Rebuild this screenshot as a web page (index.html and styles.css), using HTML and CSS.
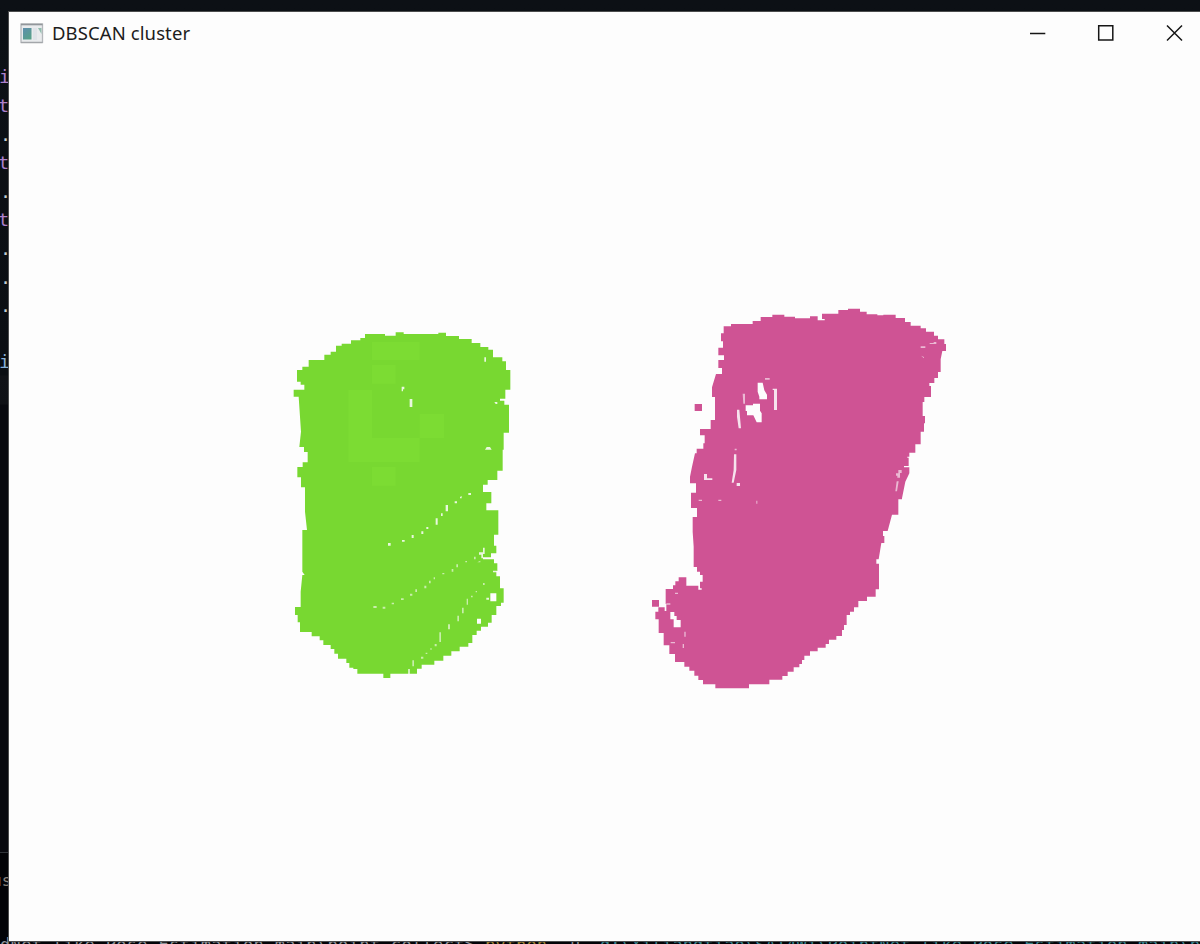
FILE: index.html
```
<!DOCTYPE html>
<html lang="en">
<head>
<meta charset="utf-8">
<title>DBSCAN cluster</title>
<link rel="stylesheet" href="styles.css">
</head>
<body>
<div class="desktop">
  <div class="editor">
    <span class="code kw l1">i</span><span class="code kw l2">t</span><span class="code dot l3">.</span><span class="code kw l4">t</span><span class="code dot l5">.</span><span class="code kw l6">t</span><span class="code dot l7">.</span><span class="code dot l8">.</span><span class="code dot l9">.</span><span class="code id l10">i</span>
    <div class="panel"><span class="tab">us</span></div>
    <svg class="terminal" width="1200" height="20" viewBox="0 0 1200 20">
      <text class="prompt" x="0" y="15" textLength="475">dNet like Pose Estimation main\point collect&gt;</text>
      <text class="command" x="485" y="15" textLength="62">python</text>
      <text class="prompt" x="570" y="15">u</text>
      <text class="path" x="600" y="15" textLength="600">d:\Xiliangtiao\SAI4Wi\PointNet like Pose Estimation main\p</text>
    </svg>
  </div>
  <main class="window">
    <header class="titlebar">
      <svg class="app-icon" width="24" height="21" viewBox="0 0 24 21">
        <defs><linearGradient id="g" x1="0" y1="0" x2="0.6" y2="1"><stop offset="0" stop-color="#5f8eae"/><stop offset="1" stop-color="#58a08a"/></linearGradient></defs>
        <rect x="1" y="1" width="21.5" height="18.5" fill="#e9ebed" stroke="#b4b7bb" stroke-width="1.3"/>
        <path d="M1 1.5H22.5" stroke="#92969b" stroke-width="1.6"/>
        <path d="M1 19.5H22.5" stroke="#a3a6aa" stroke-width="1.3"/>
        <rect x="3" y="5" width="8.5" height="11.5" fill="url(#g)"/>
        <rect x="13" y="5" width="4" height="12" fill="#dfe3e8"/>
        <path d="M18 5H21.5V11Z" fill="#91bcae"/>
      </svg>
      <h1 class="title">DBSCAN cluster</h1>
      <div class="controls">
        <svg width="18" height="18" viewBox="0 0 18 18"><path d="M2 9.5H17.3" /></svg>
        <svg width="18" height="18" viewBox="0 0 18 18"><path d="M1.7 1.8H15.8V16H1.7Z" /></svg>
        <svg width="18" height="18" viewBox="0 0 18 18"><path d="M2 1.5L17 16.5M17 1.5L2 16.5" /></svg>
      </div>
    </header>
    <svg class="scene" width="1191" height="884" viewBox="9 56 1191 884">
      <g transform="translate(285 325) scale(.33333)">
        <path class="green" d="M36 135H52V125H71V105H118V89H137V80H153V62H170V56H198V46H226V39H240V27H300V32H332V22H356V27H460V23H483V33H522V42H560V54H586V66H610V74H624V97H652V109H663V135H676V194H661V221H645V227H658V239H672V323H656V374H653V437H637V465H608V479H594V501H619V535H604V556H640V629H627V662H634V685H618V697H594V703H627V715H637V738H634V754H645V790H656V833H648V843H634V870H620V893H609V905H588V917H575V930H562V954H550V965H524V979H499V992H475V1007H448V1019H410V1031H396V1046H374V1032H370V1046H316V1059H295V1046H217V1032H205V1028H193V1014H184V1001H159V986H148V972H137V960H115V946H104V934H80V921H45V892H38V870H30V846H47V800L52 750H59L52 740V615H66L60 560V487H48V457H37V426H53V412H68V381H57V366H43L48 320L41 215H26V194H58V179H47V170H36Z"/>
        <path class="green-light" d="M261 51H404V105H261ZM261 120H332V176H261ZM190 195H261V339H404V411H190ZM404 267H477V339H404ZM261 426H332V482H261Z"/>
        <path class="hole soft" d="M350 185h8v8h-4v6h-4ZM374 222h8v24h-8ZM598 97h5v13h-5ZM628 231h9v6h-5ZM600 374l5-8h10l5 8ZM594 668h5v19h-5ZM582 682h12v18h-5v-11h-7ZM604 818h8v6h-8ZM624 737h12v5h-12Z"/>
        <path class="hole" d="M616 805h18v24h-18ZM576 881h12v15h-12Z"/>
        <path class="hole soft" d="M309 654h8v8h-8ZM351 645h8v5h-8ZM380 630h6v9h-6ZM409 619h6v8h-6ZM424 606h6v6h-6ZM452 580h6v19h-6ZM468 565h5v8h-5ZM482 540h7v19h-7ZM509 529h7v6h-7ZM525 516l5-3v7h-5ZM550 504h8v6h-8Z"/>
        <path class="hole faint" d="M265 843h10v6h-10ZM293 845h8v6h-8ZM320 833h7v5h-7ZM348 820h8v5h-8ZM375 806h7v6h-7ZM391 793h5v8h-5ZM418 782h6v8h-6ZM432 767h5v8h-5ZM446 757h4v6h-4ZM472 744h6v4h-6ZM500 732h5v8h-5ZM514 718h5v9h-5ZM541 708h5v4h-5ZM567 695h5v8h-5ZM577 712l9-5v5ZM594 774h5v6h-5ZM572 798h4v4h-4ZM558 812h5v5h-5ZM545 821h4v18h-4ZM531 848h5v17h-5ZM517 872h5v17h-5ZM489 898h6v15h-6ZM463 922h5v29h-5ZM449 957h6v7h-6ZM436 970h4v4h-4ZM422 983h5v4h-5ZM408 995h7v6h-7ZM382 1006h5v18h-5Z"/>
      </g>
      <g transform="translate(680 300) scale(.33333)">
        <path class="pink" d="M131 79H153V72H218V63H242V51H277V44H313V50H345V55H390V49H413V61H434V57H426V41H475V30H504V26H540V35H560V43H592V46H610V44H647V54H675V66H692V77H722V85H738V95H762V107H774V118H793V132H798V153H787L782 178V216H774V234H763V249H748V258H753V291H733V306H728V348H735V370H732V395H722V433H706V458H688V470H682V473H686V498H672V502H688V520L676 545L666 595V598H655V644H636L623 693H609V708H613V729H604L596 778H589V791H597V868H587V890H561V903H535V922H522V935H510V945H500V975H492V990H486V1008H469V1019H447V1032H437V1043H413V1054H390V1067H373V1080H366V1092H358V1102H341V1115H323V1128H307V1139H268V1153H207V1165H106V1153H69V1140H55V1127H43V1112H28V1100H13V1086H-15V1062H-32V1036H-49V999H-64V958H-74V935H-65V922H-46V933H-41V912H-43V867H-21V856H-14V844H-4V832H19V857H55V869H65V865H60V845H68V825H60V815H51V801H41V740L38 695V651H51V624H33V578H48V550H30V530L36 500L45 460H50V446H70V430H74V406H60V387H92V360H105V291H96V262L108 222H126V204H115V180H132V166H115V143H129V124H123V100H131ZM44 312H66V333H44ZM-84 900H-63V920H-84Z"/>
        <path class="hole" d="M233 248H248L253 271L261 284V298H238V290L233 275ZM197 316H219V311H240V332L245 340V367H230L220 346H201V333H197ZM-29 936H-17V948H-10V960H2V982H-19V958H-29Z"/>
        <path class="hole soft" d="M278 266H291V330H282V270H278ZM171 329H178L183 385H176L171 350ZM162 463H169V510L161 548H155L161 510ZM72 522H81V535H97V540H72ZM170 549H180V558H170Z"/>
        <path class="hole faint" d="M188 281h7v30h-5ZM255 234h14v5h-14ZM722 139h14v5h-14ZM749 129h12v-3h8v6h-20ZM723 167l9 4v4ZM164 446h6v5h-6ZM648 520h7v-10h10v9h-5v14h-8v-6h-4ZM646 574l4-30h6l-5 30ZM56 599h10v4h-10ZM115 599h9v4h-9ZM229 602h3v9h-3ZM-15 878h9v4h-9ZM-41 910h12v4h-12ZM13 995h4v15h-4ZM-28 1026h13v4h-13ZM8 1032h4v12h-4Z"/>
      </g>
    </svg>
  </main>
</div>
</body>
</html>
```
FILE: styles.css
```
body { margin: 0; }
.desktop {
  position: relative;
  box-sizing: border-box;
  width: 1200px;
  height: 944px;
  padding: 11px 0 0 8px;
  overflow: hidden;
  background: linear-gradient(#0c1015 0, #0b0e13 375px, #101217 376px, #0f1116 404px, #08090f 405px, #08090f 852px, #020307 853px);
}
.editor { position: absolute; inset: 0; }
.code {
  position: absolute;
  font: 18.5px/24px "DejaVu Sans Mono", monospace;
}
.kw { color: #ad80cc; left: -1px; }
.dot { color: #c4cdd4; left: 0; }
.id { color: #88b0d6; left: -1px; }
.l1 { top: 65px; }
.l2 { top: 94px; }
.l3 { top: 123px; }
.l4 { top: 151px; }
.l5 { top: 180px; }
.l6 { top: 208px; }
.l7 { top: 237px; }
.l8 { top: 266px; }
.l9 { top: 294px; }
.l10 { top: 350px; }
.l2, .l4, .l6 { left: -2px; }
.panel {
  position: absolute;
  top: 852px;
  width: 8px;
  height: 92px;
  overflow: hidden;
  border-top: 1px solid #30343a;
}
.tab {
  display: block;
  margin: 18px 0 0 -8px;
  color: #8a857d;
  font: 16px/20px "DejaVu Sans Mono", monospace;
}
.terminal { position: absolute; left: 0; top: 936px; }
.terminal text { font: 17px "DejaVu Sans Mono", monospace; }
.prompt { fill: #8b9096; }
.command { fill: #9c7f32; }
.path { fill: #38808a; }
.window {
  position: relative;
  display: flex;
  flex-direction: column;
  box-sizing: border-box;
  width: 1193px;
  height: 931px;
  border: 1px solid #4c4d4e;
  background: #fdfdfd;
}
.titlebar {
  display: flex;
  align-items: center;
  box-sizing: border-box;
  flex: none;
  height: 44px;
  padding: 0 17px 2px 11px;
}
.title {
  margin: 0 0 0 8px;
  color: #1c1c20;
  font: 400 18.5px/24px "Noto Sans", sans-serif;
  letter-spacing: .1px;
}
.controls { display: flex; gap: 50.5px; margin-left: auto; }
.controls path { fill: none; stroke: #161616; stroke-width: 1.5; }
.scene { display: block; flex: none; }
.green { fill: #78d831; }
.green-light { fill: #7cdc33; }
.pink { fill: #cf5394; }
.hole { fill: #fdfdfd; }
.soft { opacity: .85; }
.faint { opacity: .6; }
```
